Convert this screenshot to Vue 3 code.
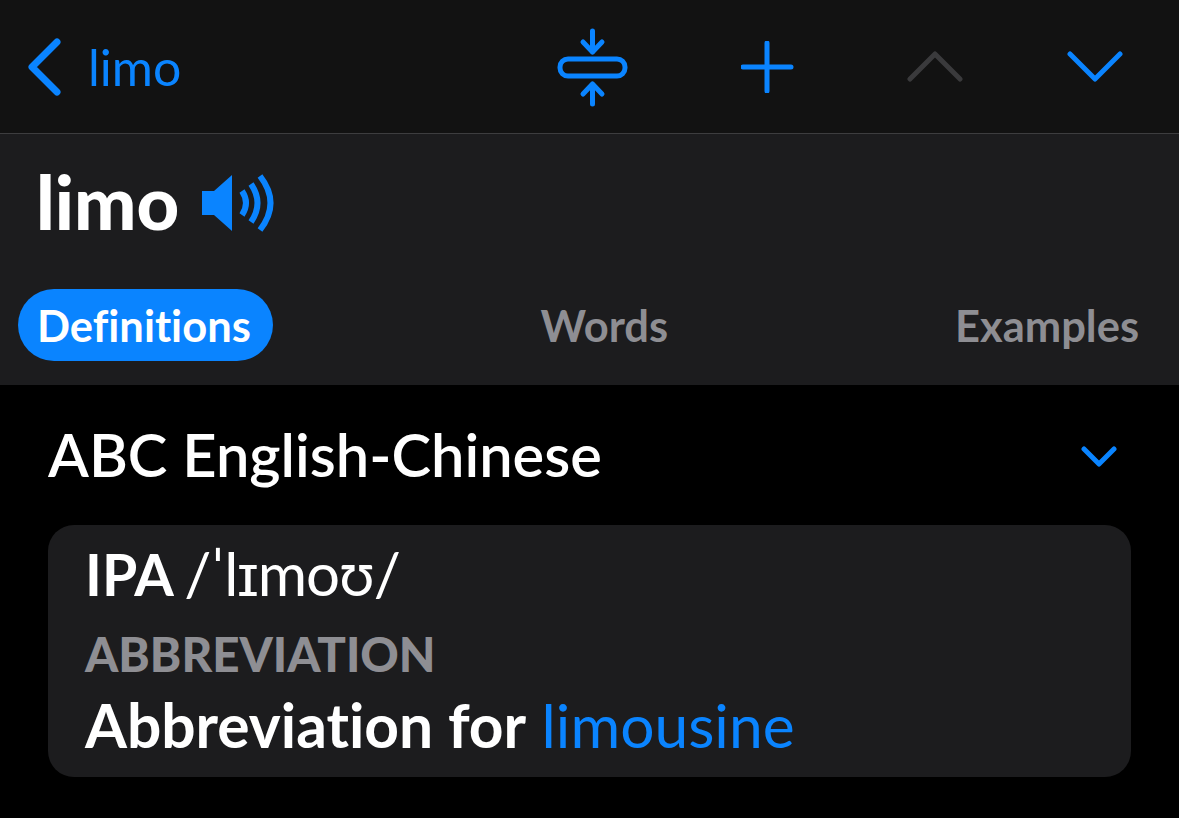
<script setup>
const tabs = ['Definitions', 'Words', 'Examples']
</script>

<template>
  <main class="page">
    <nav class="nav">
      <div class="nav__back">
        <svg class="back-icon" width="36" height="58" viewBox="0 0 36 58">
          <path d="M31 4 L6 29 L31 54" />
        </svg>
        <span>limo</span>
      </div>
      <div class="nav__tools">
        <svg width="72" height="80" viewBox="0 0 72 80">
          <rect x="3" y="32" width="65" height="17" rx="8" />
          <path d="M35.5 4 V25 M26 15 L35.5 25 L45 15 M35.5 77 V57 M26 67 L35.5 57 L45 67" />
        </svg>
        <svg class="gap-wide" width="54" height="52" viewBox="0 0 54 52">
          <path d="M26 2 V50 M2 26 H50" />
        </svg>
        <svg class="gap-wide disabled" width="56" height="32" viewBox="0 0 56 32">
          <path d="M3 28 L28 3 L53 28" />
        </svg>
        <svg width="56" height="32" viewBox="0 0 56 32">
          <path d="M3 3 L28 28 L53 3" />
        </svg>
      </div>
    </nav>

    <header class="head">
      <div class="head__title">
        <h1>limo</h1>
        <svg class="speaker" width="76" height="58" viewBox="0 0 76 58">
          <path class="fill" d="M1 17 H13 L31 1 V57 L13 41 H1 Z" />
          <path d="M41 17 Q49 29 41 41 M50 10 Q63 29 50 48 M59 2 Q80 29 59 56" />
        </svg>
      </div>
      <div class="tabs">
        <button v-for="(tab, i) in tabs" :key="tab" class="tab" :class="{ 'tab--active': i === 0 }">{{ tab }}</button>
      </div>
    </header>

    <section class="dict">
      <div class="dict__top">
        <h2>ABC English-Chinese</h2>
        <svg width="36" height="22" viewBox="0 0 36 22">
          <path d="M3 3 L18 18 L33 3" />
        </svg>
      </div>
      <div class="card">
        <p class="ipa"><b>IPA</b> <span class="ipa__text">/ˈl<span class="ipa__glyph">ɪ</span>moʊ/</span></p>
        <p class="pos">ABBREVIATION</p>
        <p class="def"><b>Abbreviation for</b> <a>limousine</a></p>
      </div>
    </section>
  </main>
</template>

<style scoped>
.page {
  width: 1179px;
  height: 818px;
  overflow: hidden;
  background: #000;
  color: #fff;
  font-family: Lato, "Open Sans", sans-serif;
  font-variant-ligatures: none;
}

svg {
  flex: none;
  fill: none;
  stroke: #0a84ff;
  stroke-width: 5;
  stroke-linecap: round;
  stroke-linejoin: round;
}

.nav {
  height: 133px;
  background: #121212;
  border-bottom: 1px solid #3d3d3f;
  display: flex;
  align-items: center;
  justify-content: space-between;
  padding: 0 56px 0 26px;
}

.nav__back {
  display: flex;
  align-items: center;
  gap: 26px;
  color: #0a84ff;
  font-size: 50px;
}

.back-icon {
  stroke-width: 7;
}

.nav__tools {
  display: flex;
  align-items: center;
  gap: 104px;
}

.nav__tools .gap-wide {
  margin-left: 8px;
}

.nav__tools .disabled {
  stroke: #3a3a3c;
}

.head {
  height: 251px;
  background: #1c1c1e;
  padding: 0 21px 0 18px;
}

.head__title {
  height: 155px;
  display: flex;
  align-items: center;
  gap: 22px;
  padding: 0 0 17px 18px;
  box-sizing: border-box;
}

h1 {
  margin: 0 0 4px;
  font-size: 74px;
  font-weight: 900;
}

.head__title .fill {
  fill: #0a84ff;
  stroke: none;
}

.speaker {
  stroke-linecap: butt;
  stroke-width: 6;
}

.tabs {
  display: flex;
  justify-content: space-between;
  align-items: center;
}

.tab {
  height: 72px;
  padding: 0 19px;
  border: none;
  border-radius: 36px;
  background: transparent;
  color: #8e8e93;
  font: 700 43.5px Lato, "Open Sans", sans-serif;
  font-variant-ligatures: none;
}

.tab--active {
  padding-right: 22px;
  background: #0a84ff;
  color: #fff;
}

.dict {
  padding: 32px 48px 0;
}

.dict__top {
  height: 108px;
  display: flex;
  align-items: center;
  justify-content: space-between;
  padding: 0 14px 34px 0;
  box-sizing: border-box;
}

.dict__top svg {
  margin-top: 6px;
}

h2 {
  margin: 0;
  font-size: 59.6px;
  font-weight: 600;
}

.card {
  height: 252px;
  box-sizing: border-box;
  padding: 9px 37px 0;
  background: #1c1c1e;
  border-radius: 26px;
}

.card p {
  margin: 0;
}

.ipa {
  font-size: 60px;
  line-height: 78px;
}

.ipa b {
  font-size: 57px;
  margin-right: -5px;
}

.ipa__text {
  letter-spacing: -1px;
}

.ipa__glyph {
  font-family: "Liberation Sans", sans-serif;
}

.pos {
  font-size: 47.5px;
  line-height: 78px;
  font-weight: 900;
  color: #8e8e93;
}

.def {
  font-size: 60.5px;
  line-height: 64px;
}

.def a {
  color: #0a84ff;
}
</style>

<style>
body {
  background: #000;
}
</style>
